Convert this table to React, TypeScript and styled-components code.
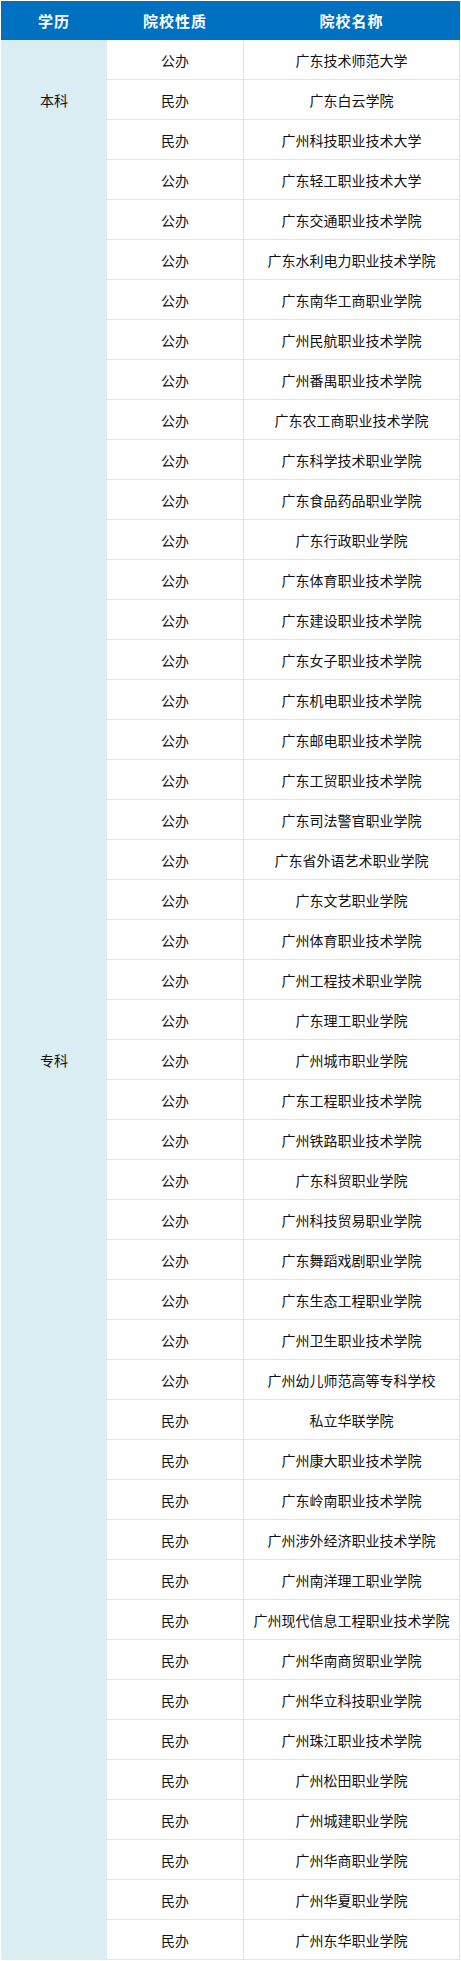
import React from "react";
import styled, { createGlobalStyle } from "styled-components";

const Global = createGlobalStyle`
  html, body { margin: 0; padding: 0; background: #fff; }
  * { box-sizing: border-box; }
`;

type Row = { type: string; name: string };

const benke: Row[] = [
  { type: "公办", name: "广东技术师范大学" },
  { type: "民办", name: "广东白云学院" },
  { type: "民办", name: "广州科技职业技术大学" },
];

const zhuanke: Row[] = [
  { type: "公办", name: "广东轻工职业技术大学" },
  { type: "公办", name: "广东交通职业技术学院" },
  { type: "公办", name: "广东水利电力职业技术学院" },
  { type: "公办", name: "广东南华工商职业学院" },
  { type: "公办", name: "广州民航职业技术学院" },
  { type: "公办", name: "广州番禺职业技术学院" },
  { type: "公办", name: "广东农工商职业技术学院" },
  { type: "公办", name: "广东科学技术职业学院" },
  { type: "公办", name: "广东食品药品职业学院" },
  { type: "公办", name: "广东行政职业学院" },
  { type: "公办", name: "广东体育职业技术学院" },
  { type: "公办", name: "广东建设职业技术学院" },
  { type: "公办", name: "广东女子职业技术学院" },
  { type: "公办", name: "广东机电职业技术学院" },
  { type: "公办", name: "广东邮电职业技术学院" },
  { type: "公办", name: "广东工贸职业技术学院" },
  { type: "公办", name: "广东司法警官职业学院" },
  { type: "公办", name: "广东省外语艺术职业学院" },
  { type: "公办", name: "广东文艺职业学院" },
  { type: "公办", name: "广州体育职业技术学院" },
  { type: "公办", name: "广州工程技术职业学院" },
  { type: "公办", name: "广东理工职业学院" },
  { type: "公办", name: "广州城市职业学院" },
  { type: "公办", name: "广东工程职业技术学院" },
  { type: "公办", name: "广州铁路职业技术学院" },
  { type: "公办", name: "广东科贸职业学院" },
  { type: "公办", name: "广州科技贸易职业学院" },
  { type: "公办", name: "广东舞蹈戏剧职业学院" },
  { type: "公办", name: "广东生态工程职业学院" },
  { type: "公办", name: "广州卫生职业技术学院" },
  { type: "公办", name: "广州幼儿师范高等专科学校" },
  { type: "民办", name: "私立华联学院" },
  { type: "民办", name: "广州康大职业技术学院" },
  { type: "民办", name: "广东岭南职业技术学院" },
  { type: "民办", name: "广州涉外经济职业技术学院" },
  { type: "民办", name: "广州南洋理工职业学院" },
  { type: "民办", name: "广州现代信息工程职业技术学院" },
  { type: "民办", name: "广州华南商贸职业学院" },
  { type: "民办", name: "广州华立科技职业学院" },
  { type: "民办", name: "广州珠江职业技术学院" },
  { type: "民办", name: "广州松田职业学院" },
  { type: "民办", name: "广州城建职业学院" },
  { type: "民办", name: "广州华商职业学院" },
  { type: "民办", name: "广州华夏职业学院" },
  { type: "民办", name: "广州东华职业学院" },
];

const groups = [
  { label: "本科", rows: benke },
  { label: "专科", rows: zhuanke },
];

const Page = styled.div`
  padding: 1px 1px 1px 1px;
  width: 461px;
  background: #fff;
`;

const Table = styled.div`
  display: grid;
  grid-template-columns: 106px 136px 217px;
  grid-template-rows: 39px;
  grid-auto-rows: 40px;
  width: 459px;
  font-family: "Noto Sans CJK SC", "Noto Sans", sans-serif;
  color: #111;
`;

const HeadCell = styled.div`
  background: #0070c0;
  color: #fff;
  font-weight: 700;
  font-size: 15px;
  letter-spacing: 1px;
  display: flex;
  align-items: center;
  justify-content: center;
`;

const GroupCell = styled.div<{ $start: number; $span: number }>`
  grid-column: 1;
  grid-row: ${(p) => p.$start} / span ${(p) => p.$span};
  background: #daedf3;
  font-size: 14px;
  display: flex;
  align-items: center;
  justify-content: center;
`;

const Cell = styled.div<{ $last?: boolean }>`
  font-size: 14px;
  display: flex;
  align-items: center;
  justify-content: center;
  background: #fff;
  border-bottom: 1px solid #e3e3e3;
  ${(p) =>
    p.$last
      ? "border-left: 1px solid #e3e3e3; border-right: 1px solid #e3e3e3;"
      : ""}
`;

export default function App() {
  let start = 2;
  return (
    <>
      <Global />
      <Page>
        <Table>
          <HeadCell>学历</HeadCell>
          <HeadCell>院校性质</HeadCell>
          <HeadCell>院校名称</HeadCell>
          {groups.map((g) => {
            const s = start;
            start += g.rows.length;
            return (
              <React.Fragment key={g.label}>
                <GroupCell $start={s} $span={g.rows.length}>
                  {g.label}
                </GroupCell>
                {g.rows.map((r, i) => (
                  <React.Fragment key={r.name}>
                    <Cell style={{ gridRow: s + i, gridColumn: 2 }}>{r.type}</Cell>
                    <Cell $last style={{ gridRow: s + i, gridColumn: 3 }}>
                      {r.name}
                    </Cell>
                  </React.Fragment>
                ))}
              </React.Fragment>
            );
          })}
        </Table>
      </Page>
    </>
  );
}
